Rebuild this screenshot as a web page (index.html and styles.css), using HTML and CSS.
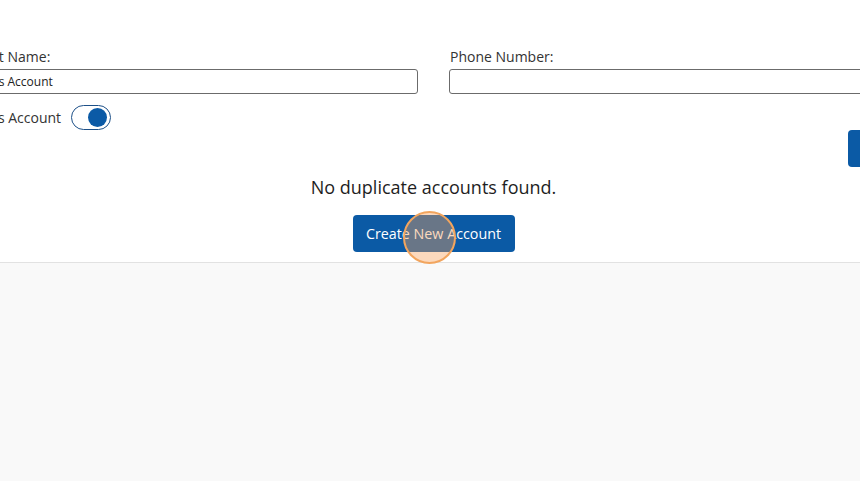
FILE: index.html
```html
<!DOCTYPE html>
<html lang="en">
<head>
<meta charset="utf-8">
<title>Duplicate Check</title>
<link rel="stylesheet" href="styles.css">
</head>
<body>
<div class="page">
  <section class="panel">
    <div class="form-grid">
      <div class="field">
        <label class="label label-first">Account Name:</label>
        <div class="input">Business Account</div>
      </div>
      <div class="field">
        <label class="label">Phone Number:</label>
        <div class="input"></div>
      </div>
    </div>
    <div class="toggle-row">
      <span class="toggle-label">Business Account</span>
      <span class="toggle"><span class="knob"></span></span>
    </div>
    <div class="actions">
      <button class="btn btn-search">Search</button>
    </div>
    <p class="message">No duplicate accounts found.</p>
    <div class="create-row">
      <button class="btn btn-create">Create New Account</button>
    </div>
  </section>
  <div class="lower"></div>
</div>
<div class="cursor-mark"></div>
</body>
</html>
```

FILE: styles.css
```css
html, body {
  margin: 0;
  padding: 0;
  overflow: hidden;
  background: #ffffff;
}
body {
  width: 860px;
  height: 481px;
  font-family: "Open Sans", "Noto Sans", sans-serif;
  color: #333333;
  position: relative;
}
.page {
  display: flex;
  flex-direction: column;
  height: 481px;
}
.panel {
  margin-left: -53px;
  width: 973px;
  padding: 47px 0 10px 0;
  border-bottom: 1px solid #e2e2e2;
  display: flex;
  flex-direction: column;
}
.form-grid {
  display: grid;
  grid-template-columns: 471px 471px;
  column-gap: 31px;
}
.field {
  display: flex;
  flex-direction: column;
  gap: 2px;
}
.label {
  font-size: 14px;
  line-height: 20px;
  color: #333333;
  padding-left: 1px;
}
.label-first {
  padding-left: 4px;
}
.input {
  box-sizing: border-box;
  height: 25px;
  border: 1px solid #6b6b6b;
  border-radius: 3px;
  padding: 0 7px;
  font-size: 12px;
  line-height: 24px;
  color: #222222;
}
.toggle-row {
  margin-top: 11px;
  display: flex;
  align-items: center;
  gap: 10px;
  height: 25px;
}
.toggle-label {
  font-size: 14px;
  line-height: 20px;
  color: #333333;
}
.toggle {
  box-sizing: border-box;
  width: 40px;
  height: 25px;
  border: 1.5px solid #1d5088;
  border-radius: 13px;
  display: flex;
  align-items: center;
  justify-content: flex-end;
  padding-right: 3px;
}
.knob {
  width: 19px;
  height: 19px;
  border-radius: 50%;
  background: #0b5aa6;
}
.actions {
  display: flex;
  justify-content: flex-end;
}
.btn {
  border: none;
  background: #0b5aa5;
  color: #ffffff;
  font-family: "Open Sans", "Noto Sans", sans-serif;
  border-radius: 4px;
  height: 37px;
  cursor: pointer;
}
.btn-search {
  width: 72px;
  font-size: 14px;
}
.message {
  margin: 9px 0 0 0;
  text-align: center;
  font-size: 18px;
  line-height: 22px;
  font-weight: 500;
  color: #1e1e1e;
}
.create-row {
  margin-top: 17px;
  display: flex;
  justify-content: center;
}
.btn-create {
  width: 162px;
  font-size: 14.3px;
  padding: 0;
}
.lower {
  flex: 1;
  background: #f9f9f9;
}
.cursor-mark {
  position: absolute;
  left: 403px;
  top: 211px;
  width: 53px;
  height: 53px;
  box-sizing: border-box;
  border-radius: 50%;
  border: 2px solid #f2a55e;
  background: rgba(247, 160, 90, 0.4);
}
```
